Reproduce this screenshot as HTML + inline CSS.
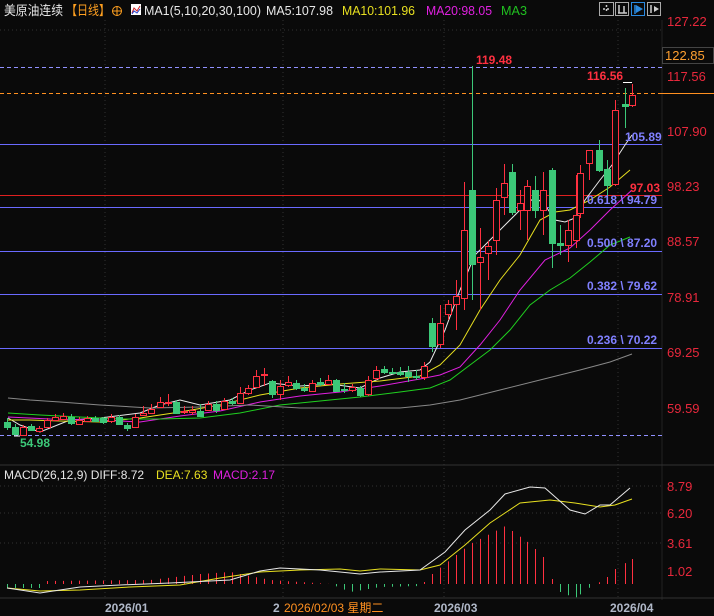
<!DOCTYPE html>
<html><head><meta charset="utf-8"><style>
html,body{margin:0;padding:0;background:#0a0a0a;width:714px;height:616px;overflow:hidden}
svg{display:block}
text{font-family:"Liberation Sans","Noto Sans CJK SC",sans-serif}
</style></head><body>
<svg id="s" width="714" height="616" viewBox="0 0 714 616" xmlns="http://www.w3.org/2000/svg">
<rect width="714" height="616" fill="#0a0a0a"/>
<g stroke="#333" stroke-dasharray="1,3" stroke-width="1">
<line x1="105" y1="20" x2="105" y2="600"/><line x1="283" y1="20" x2="283" y2="600"/><line x1="444" y1="20" x2="444" y2="600"/><line x1="618" y1="20" x2="618" y2="600"/>
<line x1="0" y1="30" x2="662" y2="30"/><line x1="0" y1="486" x2="662" y2="486"/><line x1="0" y1="513" x2="662" y2="513"/><line x1="0" y1="543" x2="662" y2="543"/>
</g>
<line x1="662" y1="20" x2="662" y2="600" stroke="#222"/>
<line x1="0" y1="465" x2="714" y2="465" stroke="#333"/>
<line x1="0" y1="598" x2="714" y2="598" stroke="#333"/>
<g stroke="#6a6aff" stroke-width="1">
<line x1="0" y1="144.5" x2="662" y2="144.5"/><line x1="0" y1="207.5" x2="662" y2="207.5"/><line x1="0" y1="251.5" x2="662" y2="251.5"/><line x1="0" y1="294.5" x2="662" y2="294.5"/><line x1="0" y1="348.5" x2="662" y2="348.5"/>
</g>
<line x1="0" y1="195.5" x2="662" y2="195.5" stroke="#e02020"/>
<line x1="0" y1="67.5" x2="662" y2="67.5" stroke="#9090ff" stroke-dasharray="4,3"/>
<line x1="0" y1="435.5" x2="662" y2="435.5" stroke="#9090ff" stroke-dasharray="4,3"/>
<line x1="0" y1="93.5" x2="662" y2="93.5" stroke="#ff9020" stroke-dasharray="4,3"/>
<line x1="662" y1="93.5" x2="714" y2="93.5" stroke="#ff9020"/>
<g id="ma" fill="none" stroke-width="1"></g>
<g id="cd"></g>
<g id="mc"></g>
<text x="4" y="15" fill="#e8e8e8" font-size="13" textLength="59" lengthAdjust="spacingAndGlyphs">美原油连续</text>
<text x="66" y="15" fill="#ffa020" font-size="13" textLength="44" lengthAdjust="spacingAndGlyphs">【日线】</text>
<circle cx="117" cy="11" r="4.5" fill="none" stroke="#ffa020"/><line x1="112" y1="11" x2="122" y2="11" stroke="#ffa020"/><line x1="117" y1="6" x2="117" y2="16" stroke="#ffa020"/>
<rect x="131" y="4" width="10" height="11" fill="#fff"/><polyline points="132,13 134,8 137,11 140,6" stroke="#d02020" fill="none"/><polyline points="132,14 134,11 137,13 140,9" stroke="#2040d0" fill="none"/>
<text x="144" y="15" fill="#e8e8e8" font-size="13" textLength="117" lengthAdjust="spacingAndGlyphs">MA1(5,10,20,30,100)</text>
<text x="266" y="15" fill="#e8e8e8" font-size="13" textLength="67" lengthAdjust="spacingAndGlyphs">MA5:107.98</text>
<text x="342" y="15" fill="#e8e020" font-size="13" textLength="73" lengthAdjust="spacingAndGlyphs">MA10:101.96</text>
<text x="426" y="15" fill="#e020e0" font-size="13" textLength="66" lengthAdjust="spacingAndGlyphs">MA20:98.05</text>
<text x="501" y="15" fill="#20c020" font-size="13" textLength="26" lengthAdjust="spacingAndGlyphs">MA3</text>
<g fill="none" stroke="#aaa"><rect x="599.5" y="2.5" width="14" height="13"/><rect x="615.5" y="2.5" width="13" height="13"/><rect x="631.5" y="2.5" width="13" height="13" stroke="#2a8ae0"/><rect x="647.5" y="2.5" width="13" height="13"/></g>
<g stroke="#ccc" stroke-width="1.5"><line x1="603" y1="9" x2="610" y2="9" stroke-dasharray="2,2"/><line x1="606.5" y1="5" x2="606.5" y2="13" stroke-dasharray="2,2"/><line x1="619" y1="5" x2="619" y2="13"/><line x1="624" y1="6" x2="624" y2="13"/><line x1="618" y1="13" x2="627" y2="13"/><line x1="651" y1="5" x2="651" y2="13"/></g>
<polygon points="636,5 643,9 636,13" fill="#2a8ae0"/><line x1="635" y1="5" x2="635" y2="14" stroke="#2a8ae0" stroke-width="1.5"/>
<polygon points="654,6 659,9 654,12" fill="#ccc"/>
<g fill="#e8283c" font-size="13">
<text x="667" y="26">127.22</text><text x="667" y="81">117.56</text><text x="667" y="136">107.90</text><text x="667" y="191">98.23</text><text x="667" y="246">88.57</text><text x="667" y="302">78.91</text><text x="667" y="357">69.25</text><text x="667" y="413">59.59</text>
<text x="667" y="491">8.79</text><text x="667" y="518">6.20</text><text x="667" y="548">3.61</text><text x="667" y="576">1.02</text>
</g>
<rect x="662.5" y="47.5" width="51" height="16" fill="#0a0a0a" stroke="#444"/>
<text x="665" y="60" fill="#ffa030" font-size="13">122.85</text>
<g font-size="12" font-weight="bold">
<text x="476" y="64" fill="#ff3040">119.48</text>
<text x="587" y="80" fill="#ff3040">116.56</text>
<text x="625" y="141" fill="#8080ff">105.89</text>
<text x="630" y="192" fill="#ff3040">97.03</text>
<text x="587" y="204" fill="#8080ff">0.618 \ 94.79</text>
<text x="587" y="247" fill="#8080ff">0.500 \ 87.20</text>
<text x="587" y="290" fill="#8080ff">0.382 \ 79.62</text>
<text x="587" y="344" fill="#8080ff">0.236 \ 70.22</text>
<text x="20" y="447" fill="#3cc878">54.98</text>
</g>
<line x1="623" y1="82.5" x2="632" y2="82.5" stroke="#fff"/>
<line x1="14" y1="436" x2="20" y2="436" stroke="#fff"/>
<text x="4" y="479" fill="#e8e8e8" font-size="12">MACD(26,12,9) DIFF:8.72</text>
<text x="156" y="479" fill="#e8e020" font-size="12">DEA:7.63</text>
<text x="213" y="479" fill="#e020e0" font-size="12">MACD:2.17</text>
<g font-size="12" font-weight="bold" fill="#b0b8c8">
<text x="105" y="612">2026/01</text><text x="273" y="612">2</text><text x="434" y="612">2026/03</text><text x="610" y="612">2026/04</text>
</g>
<rect x="281" y="600" width="70" height="16" fill="#0a0a0a"/>
<text x="284" y="612" fill="#ff9020" font-size="12">2026/02/03 星期二</text>
</svg>
<script>
var NS="http://www.w3.org/2000/svg";
function el(p,t,a){var e=document.createElementNS(NS,t);for(var k in a)e.setAttribute(k,a[k]);p.appendChild(e);return e;}
var C=[[7,422,427,418,430],[15,427,434,424,436],[23,435,427,425,436],[31,426,430,424,431],[39,431,428,426,432],[47,427,420,418,428],[55,420,417,414,421],[63,419,416,413,420],[71,417,423,414,425],[79,424,420,417,425],[87,421,418,416,422],[95,418,421,416,422],[103,418,422,417,424],[111,421,417,414,423],[119,417,424,415,425],[127,425,428,423,431],[135,427,417,414,428],[143,415,413,406,416],[151,413,409,404,414],[160,407,402,397,408],[168,402,402,394,406],[176,402,413,400,414],[184,412,411,406,414],[192,412,410,406,415],[200,411,416,404,417],[208,410,404,401,411],[216,404,410,401,413],[224,409,401,398,410],[232,401,403,398,405],[240,403,393,387,404],[248,393,388,385,395],[256,387,376,370,388],[264,374,374,368,386],[272,381,394,380,398],[280,394,386,380,400],[288,385,382,376,387],[296,383,388,380,390],[304,388,390,384,392],[312,391,383,380,392],[320,382,384,378,386],[328,384,380,375,385],[336,380,391,379,392],[344,389,390,383,393],[352,390,387,384,392],[360,388,395,386,397],[368,394,380,376,396],[376,378,370,366,380],[384,369,372,366,374],[392,372,373,368,374],[400,372,374,367,376],[408,372,376,366,382],[416,376,377,370,380],[424,377,366,362,380],[432,323,346,318,352],[440,344,323,305,348],[448,314,304,300,320],[456,304,296,280,330],[464,298,230,182,310],[472,190,264,66,300],[480,262,257,228,310],[488,253,246,241,280],[496,240,200,188,255],[504,197,183,164,215],[512,172,212,164,215],[520,210,203,190,230],[527,210,186,180,240],[535,190,210,176,218],[543,210,190,172,235],[552,170,243,168,268],[560,243,245,225,255],[568,245,230,220,262],[576,240,215,175,248],[580,213,173,165,218],[589,163,150,150,180],[599,150,170,140,172],[607,169,185,160,198],[615,184,110,100,186],[625,104,106,88,128],[632,105,95,84,107]];
var G=[432,472,512,535,552,560,599,607,625];
var cd=document.getElementById('cd');
C.forEach(function(c){var x=c[0],o=c[1],cl=c[2],up=cl<=o&&G.indexOf(x)<0;
var col=up?"#ff3040":"#3cc878";
var top=Math.min(o,cl),bot=Math.max(o,cl);if(bot-top<1)bot=top+1;
el(cd,'line',{x1:x+.5,y1:c[3],x2:x+.5,y2:top,stroke:col});
el(cd,'line',{x1:x+.5,y1:bot,x2:x+.5,y2:c[4],stroke:col});
if(up)el(cd,'rect',{x:x-2.5,y:top+.5,width:6,height:bot-top,fill:"#0a0a0a",stroke:col});
else el(cd,'rect',{x:x-3,y:top,width:7,height:bot-top+1,fill:col});});
var MA=[["#e8e8e8","8,418 20,425 40,432 50,428 70,420 100,418 140,413 160,405 180,400 200,405 230,400 250,390 270,383 300,386 330,384 360,388 380,378 400,372 420,370 430,362 445,330 460,290 475,255 490,240 505,225 520,210 535,197 545,205 555,220 565,222 575,218 585,200 600,180 612,165 625,145 632,135"],
["#e8e020","8,420 30,420 60,421 100,422 140,418 180,412 220,405 260,395 300,388 340,384 380,381 420,376 440,365 460,345 480,310 500,280 520,255 540,220 555,212 570,210 590,200 610,187 630,170"],
["#e020e0","8,417 50,419 100,420 140,422 180,416 220,411 260,402 300,396 340,392 380,386 420,379 440,375 460,367 480,345 500,320 520,290 545,260 570,248 590,230 610,210 632,190"],
["#20d020","8,413 40,415 80,417 120,419 160,419 200,418 240,413 280,405 320,401 360,397 400,392 430,388 450,380 470,365 490,350 510,330 530,305 550,290 570,278 590,262 610,245 630,237"],
["#888","8,398 30,400 60,402 100,405 150,408 200,407 250,405 300,408 350,408 400,408 430,405 460,400 500,390 540,380 580,370 610,362 632,354"]];
var ma=document.getElementById('ma');
MA.forEach(function(m){el(ma,'polyline',{points:m[1],stroke:m[0]});});
var mc=document.getElementById('mc');var z=584;
function hv(x){
var pts=[[7,-4],[40,-4],[45,3],[150,4],[200,10],[230,12],[270,4],[300,2],[330,0],[350,-8],[380,-3],[420,-2],[432,10],[470,40],[505,58],[530,40],[545,25],[552,5],[560,-8],[575,-14],[590,-3],[605,5],[615,15],[632,25]];
for(var i=1;i<pts.length;i++){if(x<=pts[i][0]){var a=pts[i-1],b=pts[i],t=(x-a[0])/(b[0]-a[0]);return a[1]+(b[1]-a[1])*t;}}return 0;}
C.forEach(function(c){var x=c[0],v=hv(x);el(mc,'line',{x1:x+.5,y1:z,x2:x+.5,y2:z-v,stroke:v>=0?"#ff3040":"#3cc878"});});
el(mc,'polyline',{points:"7,588 40,591 80,590 130,587 180,585 220,578 260,572 300,570 340,569 360,571 380,569 420,570 440,565 465,545 490,523 520,503 550,500 575,503 600,507 615,505 632,499",stroke:"#e8e020",fill:"none"});
el(mc,'polyline',{points:"7,588 40,593 80,587 120,585 170,583 230,580 260,571 280,568 320,570 360,574 380,572 420,570 445,552 465,530 490,510 505,494 530,487 545,488 570,510 585,514 600,505 610,505 630,488",stroke:"#e8e8e8",fill:"none"});
</script>
</body></html>
